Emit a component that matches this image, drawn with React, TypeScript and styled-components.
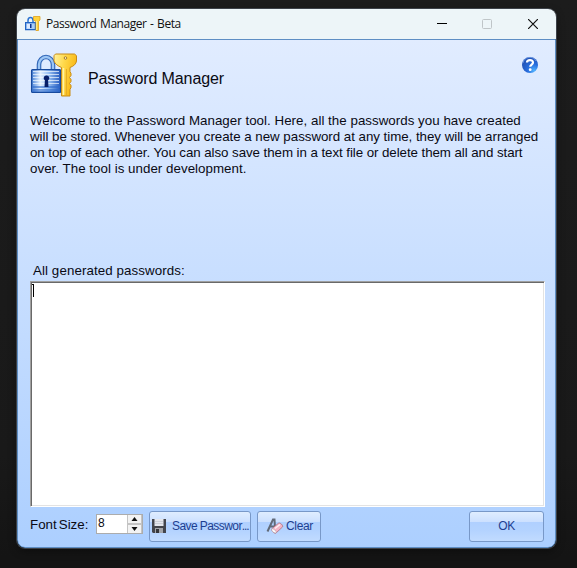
import React from "react";
import styled, { createGlobalStyle } from "styled-components";

const GlobalStyle = createGlobalStyle`
  * { box-sizing: border-box; }
  html, body { margin: 0; padding: 0; background: #1a1a1a; overflow: hidden; }
  svg { flex: none; }
`;

const Desktop = styled.main`
  width: 577px;
  height: 568px;
  padding: 9px 0 0 17px;
  background: linear-gradient(#1c1c1c, #191919 80%, #141414 98%);
  font-family: "Liberation Sans", Arial, sans-serif;
  font-size: 13.33px;
  color: #0a0a14;
`;

const Window = styled.section`
  width: 539px;
  height: 539px;
  display: flex;
  flex-direction: column;
  border-radius: 8px;
  overflow: hidden;
  box-shadow: 0 0 0 1px #3c4148, 0 3px 9px rgba(0, 0, 0, 0.4);
`;

const TitleBar = styled.header`
  height: 30px;
  flex: none;
  display: flex;
  align-items: center;
  padding-left: 8px;
  background: #edf5f8;
`;

const TitleText = styled.span`
  flex: 1;
  margin-left: 5px;
  font-family: "Open Sans", "Noto Sans", sans-serif;
  font-size: 12px;
  line-height: 16px;
  letter-spacing: -0.45px;
  word-spacing: 0.9px;
  color: #111;
`;

const Controls = styled.div`
  display: flex;
  margin-right: 1px;
`;

const Control = styled.button<{ $nudge?: boolean }>`
  width: 45px;
  height: 28px;
  padding: 0 ${(p) => (p.$nudge ? 2 : 0)}px 0 0;
  display: grid;
  place-items: center;
  border: 0;
  background: transparent;
`;

const Client = styled.div`
  flex: 1;
  display: flex;
  flex-direction: column;
  padding: 13px 11px 0 12px;
  border: 1px solid #5e8ec4;
  border-radius: 0 0 8px 8px;
  background: linear-gradient(#e1ecff, #accfff);
`;

const Heading = styled.div`
  height: 60px;
  display: flex;
  align-items: flex-start;
`;

const HeadingTitle = styled.h1`
  flex: 1;
  margin: 17px 0 0 10px;
  font-size: 16px;
  font-weight: 400;
  line-height: 18px;
  letter-spacing: -0.12px;
`;

const HelpButton = styled.button`
  width: 18px;
  height: 18px;
  margin: 3px 5px 0 0;
  padding: 0;
  border: 0;
  background: none;
`;

const Intro = styled.p`
  height: 150px;
  margin: 0;
  line-height: 16px;
`;

const Line = styled.span<{ $tracking: number }>`
  display: block;
  white-space: nowrap;
  letter-spacing: ${(p) => p.$tracking}px;
`;

const FieldLabel = styled.label`
  height: 18px;
  padding-left: 3px;
  line-height: 16px;
  letter-spacing: 0.09px;
`;

const PasswordBox = styled.div`
  height: 226px;
  width: 515px;
  flex: none;
  padding: 2px 0 0 1px;
  border: 1px solid;
  border-color: #a0a0a0 #fff #fff #a0a0a0;
  box-shadow: inset 1px 1px #696969, inset -1px -1px #e3e3e3;
  background: #fff;
`;

const Footer = styled.footer`
  height: 35px;
  display: flex;
  align-items: flex-start;
  padding-top: 4px;
`;

const SizeLabel = styled.label`
  width: 66px;
  padding-top: 6px;
  line-height: 16px;
  word-spacing: -1.6px;
  white-space: nowrap;
`;

const Spinner = styled.div`
  width: 47px;
  height: 20px;
  margin: 3px 6px 0 0;
  display: flex;
  border: 1px solid #acacac;
  background: #fff;
`;

const SpinnerValue = styled.span`
  width: 30px;
  padding: 1px 0 0 1px;
  font-size: 12px;
  line-height: 15px;
`;

const Steppers = styled.div`
  width: 15px;
  display: flex;
  flex-direction: column;
`;

const Stepper = styled.button`
  height: 9px;
  padding: 0;
  display: grid;
  place-items: center;
  border: 1px solid #c4c4c4;
  border-top-width: 0;
  background: #f3f3f3;

  & + & { border-top-width: 1px; border-bottom-width: 0; }
`;

const PushButton = styled.button<{ $width: number; $start?: number; $gap?: number; $push?: boolean }>`
  width: ${(p) => p.$width}px;
  height: 31px;
  flex: none;
  display: flex;
  align-items: center;
  justify-content: ${(p) => (p.$start === undefined ? "center" : "flex-start")};
  gap: ${(p) => p.$gap ?? 0}px;
  margin: 0 ${(p) => (p.$push ? 0 : 6)}px 0 ${(p) => (p.$push ? "auto" : 0)};
  padding: 0 0 2px ${(p) => p.$start ?? 0}px;
  border: 1px solid #7898c8;
  border-radius: 3px;
  background: linear-gradient(#dfedff 0, #cce0ff 34%, #b0d0ff 36%, #b4d3ff 65%, #c1dbff 100%);
  color: #1e3f91;
  font-family: inherit;
  font-size: 12px;
  line-height: 16px;
  white-space: nowrap;
`;

const ButtonText = styled.span<{ $tracking?: number }>`
  letter-spacing: ${(p) => p.$tracking ?? 0}px;
`;

const Ellipsis = styled.span`
  letter-spacing: -1.2px;
`;

const LockKey = () => (
  <svg width="48" height="48" viewBox="0 0 48 48" aria-hidden="true">
    <defs>
      <linearGradient id="body" x2="1">
        <stop stopColor="#4b84d8" /><stop offset=".3" stopColor="#e4f1ff" /><stop offset=".6" stopColor="#93bdf2" /><stop offset="1" stopColor="#2258bd" />
      </linearGradient>
      <linearGradient id="gold" x2="1" y2=".4">
        <stop stopColor="#fff2a0" /><stop offset=".45" stopColor="#ffd94b" /><stop offset="1" stopColor="#f8b510" />
      </linearGradient>
    </defs>
    <path d="M9 17v-5.500a7 7.500 0 0 1 14 0V17" fill="none" stroke="#3267b8" strokeWidth="4.600" />
    <path d="M9 17v-5.500a7 7.500 0 0 1 14 0V17" fill="none" stroke="#9cc6f5" strokeWidth="2.300" />
    <rect x="1.600" y="16.600" width="29" height="22.800" rx="1" fill="url(#body)" stroke="#174a9e" strokeWidth="1.300" />
    <path d="M3 18.500h26M3 21.500h26M3 24.500h26M3 27.500h26M3 30.500h26" stroke="#f4faff" strokeWidth="1" opacity=".7" />
    <path d="M2.500 33h27.500v2H2.500zM2.500 36h27.500v3H2.500z" fill="#2e6bcc" opacity=".6" />
    <path d="M16.500 22.500a2.600 2.600 0 0 0-1.600 4.800L14.500 34h4l-.4-6.700a2.600 2.600 0 0 0-1.600-4.800z" fill="#071f68" />
    <path d="M25.500 1h19l2 1.700v5.300c-.5 3-2.500 5-6.500 6.500v4l1 2v2l-1.500 2 1.500 2v2l-1.500 2 1.500 2v2l-1 2v6.500h-8.500V14.500c-3.500-1.500-6.500-3.500-7.500-6.500V2.700z" fill="url(#gold)" stroke="#c88b16" strokeWidth="1" />
    <path d="M33.500 15v27" stroke="#fff3a5" strokeWidth="1.600" />
    <path d="M36.500 16v26" stroke="#e5ad28" strokeWidth="1" />
    <circle cx="35.500" cy="5" r="1.300" fill="#fff5c8" stroke="#9d721e" strokeWidth=".9" />
  </svg>
);

const SmallLockKey = () => (
  <svg width="16" height="16" viewBox="0 0 16 16" aria-hidden="true">
    <path d="M3 7V4.500c0-4 5-4 5 0V7" fill="none" stroke="#2d73cf" strokeWidth="1.500" />
    <path d="M.6 6.600h9.800v7H.6z" fill="#a9cdf7" stroke="#2064c4" strokeWidth="1.200" />
    <path d="M2 8h3v4.500H2z" fill="#dceaff" />
    <path d="M5 8h1.500v4H5z" fill="#0b3190" />
    <path d="M8.500.5h6.500v3.500L13.500 5.500V14.500h-2.500V5.500L8.500 4z" fill="#ffd33c" stroke="#dfa11c" strokeWidth=".8" />
    <path d="M11.500 5v9" stroke="#fff0a0" strokeWidth=".8" />
  </svg>
);

const HelpIcon = () => (
  <svg width="18" height="18" viewBox="0 0 18 18" display="block" aria-hidden="true">
    <defs>
      <radialGradient id="help" cx=".75" cy=".85" r=".8">
        <stop stopColor="#4fb2ff" /><stop offset=".5" stopColor="#286ddd" /><stop offset="1" stopColor="#2355b9" />
      </radialGradient>
    </defs>
    <circle cx="9" cy="9" r="8" fill="url(#help)" />
    <path d="M2 7a7 7 0 0 1 13-2" fill="none" stroke="#80a9ec" strokeWidth="1" opacity=".7" />
    <path d="M6 6.600C6 3.200 12 3.200 12 6.500c0 2-2.800 2.100-2.800 4.200" fill="none" stroke="#fff" strokeWidth="2.200" />
    <circle cx="9.200" cy="13.700" r="1.400" fill="#fff" />
  </svg>
);

const FloppyIcon = () => (
  <svg width="16" height="16" viewBox="0 0 16 16" aria-hidden="true">
    <path d="M1 1h14v14H2l-1-1z" fill="#43454c" />
    <path d="M3.500 1h9v7h-9z" fill="#e5e7ed" />
    <path d="M4 3.500h8M4 5.500h8" stroke="#cdd0d8" />
    <path d="M4 10h8v5H4z" fill="#a3a5aa" />
    <path d="M5 11h3v4H5z" fill="#34363b" />
  </svg>
);

const EraserIcon = () => (
  <svg width="18" height="18" viewBox="0 0 18 18" aria-hidden="true">
    <path d="M1.500 14.500 7 2.500h1.500l.5 8M4 9.500h4" fill="none" stroke="#626a78" strokeWidth="2" />
    <path d="m6 11.500 6.500-5.300c1.500-1 5 2.200 4 3.800l-6.500 6c-1.500 1-5-2.500-4-4.500z" fill="#f5b4c6" stroke="#a8707f" strokeWidth=".8" />
    <path d="M6 11.500c1 0 4 2 4.500 4-1.500 1.500-6-1.500-4.500-4z" fill="#fff" stroke="#a58791" strokeWidth=".5" />
    <path d="m9 11.500 5-4" stroke="#fff0f4" strokeWidth="1.600" />
  </svg>
);

const Arrow = ({ down = false }: { down?: boolean }) => (
  <svg width="7" height="4" viewBox="0 0 7 4" display="block" aria-hidden="true">
    <path d={down ? "M.5 0h6l-3 4z" : "M3.500 0l3 4h-6z"} fill="#111" />
  </svg>
);

const Caret = () => (
  <svg width="4" height="13" viewBox="0 0 4 13" display="block" shapeRendering="crispEdges" aria-hidden="true">
    <path d="M0 .5h2M1.500 0v13" stroke="#000" />
  </svg>
);

const intro = [
  { text: "Welcome to the Password Manager tool. Here, all the passwords you have created", tracking: 0.027 },
  { text: "will be stored. Whenever you create a new password at any time, they will be arranged", tracking: -0.035 },
  { text: "on top of each other. You can also save them in a text file or delete them all and start", tracking: -0.07 },
  { text: "over. The tool is under development.", tracking: 0.03 },
];

export default function App() {
  return (
    <Desktop>
      <GlobalStyle />
      <Window>
        <TitleBar>
          <SmallLockKey />
          <TitleText>Password Manager - Beta</TitleText>
          <Controls>
            <Control aria-label="Minimize" $nudge><svg width="10" height="10"><path d="M0 4.500h10" stroke="#000" /></svg></Control>
            <Control aria-label="Maximize" disabled $nudge><svg width="10" height="10"><rect x=".5" y=".5" width="9" height="9" rx="1" fill="none" stroke="#bfc5c8" /></svg></Control>
            <Control aria-label="Close"><svg width="10" height="10"><path d="m0 0 10 10M10 0 0 10" stroke="#111" strokeWidth="1.200" /></svg></Control>
          </Controls>
        </TitleBar>
        <Client>
          <Heading>
            <LockKey />
            <HeadingTitle>Password Manager</HeadingTitle>
            <HelpButton aria-label="Help"><HelpIcon /></HelpButton>
          </Heading>
          <Intro>
            {intro.map((l) => <Line key={l.text} $tracking={l.tracking}>{l.text}</Line>)}
          </Intro>
          <FieldLabel>All generated passwords:</FieldLabel>
          <PasswordBox><Caret /></PasswordBox>
          <Footer>
            <SizeLabel>Font Size:</SizeLabel>
            <Spinner>
              <SpinnerValue>8</SpinnerValue>
              <Steppers>
                <Stepper aria-label="Increase"><Arrow /></Stepper>
                <Stepper aria-label="Decrease"><Arrow down /></Stepper>
              </Steppers>
            </Spinner>
            <PushButton $width={102} $start={1} $gap={5}><FloppyIcon /><ButtonText $tracking={-0.57}>Save Passwor<Ellipsis>...</Ellipsis></ButtonText></PushButton>
            <PushButton $width={64} $start={8} $gap={2}><EraserIcon /><ButtonText $tracking={-0.35}>Clear</ButtonText></PushButton>
            <PushButton $width={75} $push><ButtonText $tracking={-0.3}>OK</ButtonText></PushButton>
          </Footer>
        </Client>
      </Window>
    </Desktop>
  );
}
